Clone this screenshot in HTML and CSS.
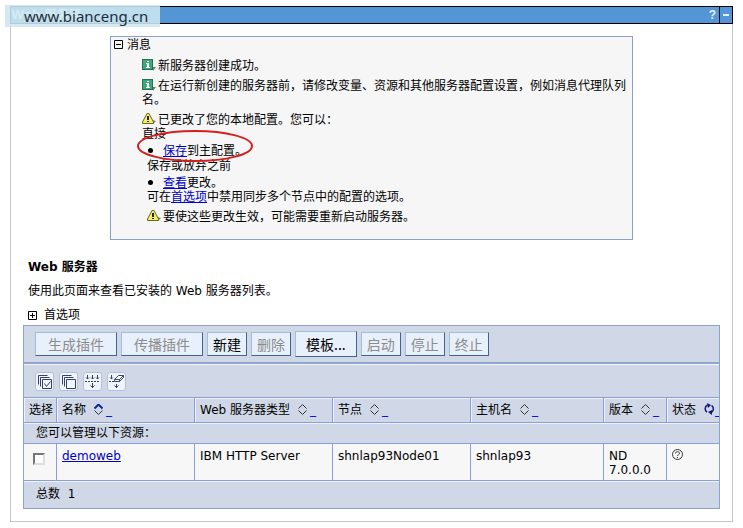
FILE: index.html
```
<!DOCTYPE html>
<html lang="zh-CN">

<head>
  <meta charset="UTF-8">
  <title>Web 服务器</title>
  <meta name="viewport" content="width=device-width, initial-scale=1.0">
  <link rel="stylesheet" href="styles.css">
</head>

<body>
  <!-- 公用图标 -->
  <svg class="symbols" width="0" height="0">
    <symbol id="icon-info" viewBox="0 0 14 12">
      <path d="M11 8l3 0-3 4z" fill="#777"/>
      <rect x="0.5" y="0.5" width="10" height="10" fill="#3fa878" stroke="#1f7550"/>
      <path d="M5 2h2v1H5zM4 4h3v4h1v1H4V8h1V5H4z" fill="#fff"/>
    </symbol>
    <symbol id="icon-warn" viewBox="0 0 14 12">
      <path d="M10 7l4 1-3 3z" fill="#777"/>
      <path d="M5 0.5h2L11.5 9v1.5H0.5V9z" fill="#f5f06a" stroke="#66661c"/>
      <path d="M5 3h2v4H5zM5 8h2v1H5z" fill="#222"/>
    </symbol>
    <symbol id="icon-sort" viewBox="0 0 9 11">
      <path d="M0.5 4.5l4-4 4 4M0.5 6.5l4 4 4-4" fill="none" stroke="#333"/>
    </symbol>
  </svg>

  <div class="watermark">www.bianceng.cn</div>

  <main class="panel">
    <header class="titlebar">
      <h1>Web 服务器</h1>
      <button class="title-btn" type="button" aria-label="帮助">?</button>
      <button class="title-btn divided" type="button" aria-label="最小化"><span class="dash"></span></button>
    </header>

    <section class="messages">
      <h2 class="msg-title">
        <svg class="toggle" viewBox="0 0 9 9"><path d="M0.5 0.5h8v8h-8zM2 4.5h5" fill="none" stroke="#000"/></svg>消息
      </h2>
      <div class="msg-list">
        <p class="msg"><svg class="msg-icon"><use href="#icon-info"/></svg>新服务器创建成功。</p>
        <p class="msg"><svg class="msg-icon"><use href="#icon-info"/></svg>在运行新创建的服务器前，请修改变量、资源和其他服务器配置设置，例如消息代理队列名。</p>
        <p class="msg"><svg class="msg-icon"><use href="#icon-warn"/></svg>已更改了您的本地配置。您可以：<br>直接</p>
        <div class="sub">
          <ul class="save-item">
            <li><a href="#">保存</a>到主配置。
              <svg class="mark" viewBox="0 0 118 34"><ellipse cx="59" cy="17" rx="57" ry="15" fill="none" stroke="#d3201f" stroke-width="2"/></svg>
            </li>
          </ul>
          <p>保存或放弃之前</p>
          <ul>
            <li><a href="#">查看</a>更改。</li>
          </ul>
          <p>可在<a href="#">首选项</a>中禁用同步多个节点中的配置的选项。</p>
          <p class="msg"><svg class="msg-icon"><use href="#icon-warn"/></svg>要使这些更改生效，可能需要重新启动服务器。</p>
        </div>
      </div>
    </section>

    <section class="content">
      <h2 class="page-title">Web 服务器</h2>
      <p class="desc">使用此页面来查看已安装的 Web 服务器列表。</p>
      <p class="prefs">
        <svg class="toggle" viewBox="0 0 9 9"><path d="M0.5 0.5h8v8h-8zM2 4.5h5M4.5 2v5" fill="none" stroke="#000"/></svg>首选项
      </p>

      <div class="grid">
        <div class="toolbar">
          <button class="btn wide" type="button" disabled>生成插件</button>
          <button class="btn wide" type="button" disabled>传播插件</button>
          <button class="btn" type="button">新建</button>
          <button class="btn" type="button" disabled>删除</button>
          <button class="btn tall" type="button">模板...</button>
          <button class="btn" type="button" disabled>启动</button>
          <button class="btn" type="button" disabled>停止</button>
          <button class="btn" type="button" disabled>终止</button>
        </div>

        <div class="toolbar icons">
          <button class="icon-btn" type="button" aria-label="全选">
            <svg viewBox="0 0 17 17"><path d="M2.5 11.5v-9h9M4.5 13.5v-9h9M6.5 6.5h9v9h-9zM8.5 10.5l2 3 4-5" /></svg>
          </button>
          <button class="icon-btn" type="button" aria-label="取消全选">
            <svg viewBox="0 0 17 17"><path d="M2.5 11.5v-9h9M4.5 13.5v-9h9M6.5 6.5h9v9h-9z"/></svg>
          </button>
          <button class="icon-btn" type="button" aria-label="显示过滤器">
            <svg viewBox="0 0 17 17"><path d="M3.5 2v4M8.5 2v4M13.5 2v4M2 4.5l1.5 1.5L5 4.5M7 4.5l1.5 1.5L10 4.5M12 4.5l1.5 1.5L15 4.5M8.5 10v5M6.5 12.5l2 2 2-2"/><path d="M1 8.5h15" stroke-dasharray="2 1"/></svg>
          </button>
          <button class="icon-btn" type="button" aria-label="清除过滤器">
            <svg viewBox="0 0 17 17"><path d="M3.5 2v4M2 4.5l1.5 1.5L5 4.5M8.500 11v4M6.5 12.5l2 2 2-2"/><path d="M6.5 6.5l4-4h5v2l-4 4h-5zM6.5 6.5h5l4-4M11.5 6.5v2" fill="#fff"/><path d="M1 8.5h5" stroke-dasharray="2 1"/></svg>
          </button>
        </div>

        <table class="servers">
          <colgroup>
            <col class="col-select">
            <col class="col-text">
            <col class="col-text">
            <col class="col-text">
            <col>
            <col class="col-version">
            <col class="col-status">
          </colgroup>
          <thead>
            <tr>
              <th>选择</th>
              <th>名称<a href="#" class="sort" aria-label="按名称排序"><svg viewBox="0 0 9 11"><path d="M0.5 4.5l4-4 4 4" fill="none" stroke="#0a2a9a" stroke-width="2"/><path d="M0.5 6.5l4 4 4-4" fill="none" stroke="#333"/></svg>_</a></th>
              <th>Web 服务器类型<a href="#" class="sort" aria-label="按类型排序"><svg><use href="#icon-sort"/></svg>_</a></th>
              <th>节点<a href="#" class="sort" aria-label="按节点排序"><svg><use href="#icon-sort"/></svg>_</a></th>
              <th>主机名<a href="#" class="sort" aria-label="按主机名排序"><svg><use href="#icon-sort"/></svg>_</a></th>
              <th>版本<a href="#" class="sort" aria-label="按版本排序"><svg><use href="#icon-sort"/></svg>_</a></th>
              <th class="status">状态<a href="#" class="sort" aria-label="刷新"><svg viewBox="0 0 11 12"><path d="M3.5 2C0.5 3.5 0.5 7.5 3 9M7.5 2.500c2.500 1.500 2.500 5 0 7" fill="none" stroke="#14147c" stroke-width="1.5"/><path d="M3 0l4 2-3 3zM8 7l-4 2 4 3z" fill="#14147c"/></svg>_</a></th>
            </tr>
          </thead>
          <tbody>
            <tr>
              <td class="band" colspan="7">您可以管理以下资源：</td>
            </tr>
            <tr class="data">
              <td class="pick"><input type="checkbox" aria-label="选择 demoweb"></td>
              <td><a href="#">demoweb</a></td>
              <td>IBM HTTP Server</td>
              <td>shnlap93Node01</td>
              <td>shnlap93</td>
              <td>ND 7.0.0.0</td>
              <td>
                <svg class="unknown" viewBox="0 0 11 11"><circle cx="5.5" cy="5.5" r="5" fill="none" stroke="#333"/><path d="M3.5 4.5c0-2.5 4-2.5 4 0 0 1-2 1-2 2.5M5.5 8v1" fill="none" stroke="#333"/></svg>
              </td>
            </tr>
          </tbody>
          <tfoot>
            <tr>
              <td class="band total" colspan="7">总数 &nbsp;1</td>
            </tr>
          </tfoot>
        </table>
      </div>
    </section>
  </main>
</body>

</html>
```
FILE: styles.css
```
* {
  margin: 0;
  padding: 0;
  box-sizing: border-box;
}

body {
  padding: 6px 10px 6px 10px;
  background-color: #fff;
  color: #000;
  font-family: "DejaVu Sans", "Noto Sans CJK SC", sans-serif;
  font-size: 12px;
  line-height: 14px;
}

a {
  color: #0000c8;
}

ul {
  list-style: none;
}

.symbols {
  position: absolute;
}

.watermark {
  position: absolute;
  left: 5px;
  top: 5px;
  z-index: 2;
  width: 155px;
  height: 22px;
  padding-left: 19px;
  background-color: rgba(205, 231, 240, 0.88);
  color: #1c2c38;
  font-family: "Noto Sans", sans-serif;
  font-size: 15px;
  line-height: 22px;
}

.panel {
  border: 1px solid #c6c6c6;
  border-top: none;
  padding-bottom: 12px;
}

/* 标题栏 */
.titlebar {
  display: flex;
  height: 18px;
  margin: 0 -1px;
  border: 1px solid #000;
  background-color: #5495d6;
}

.titlebar h1 {
  flex: 1;
  color: #fff;
  font-size: 12px;
  line-height: 16px;
}

.title-btn {
  width: 13px;
  border: none;
  background: none;
  color: #e4f0fb;
  font-family: "Liberation Sans", sans-serif;
  font-size: 12px;
  font-weight: bold;
  line-height: 14px;
}

.title-btn.divided {
  border-left: 1px solid #000;
}

.dash {
  display: block;
  width: 6px;
  height: 2px;
  margin: 0 auto;
  background-color: #e4f0fb;
}

/* 消息 */
.messages {
  margin: 12px 99px 20px;
  padding-bottom: 16px;
  border: 1px solid #8c9fcb;
  background-color: #f6f6f6;
  font-family: "Noto Sans CJK SC", sans-serif;
}

.msg-title {
  display: flex;
  align-items: center;
  padding-left: 3px;
  font-size: 12px;
  font-weight: normal;
}

.toggle {
  width: 9px;
  height: 9px;
  margin-right: 4px;
}

.msg-list {
  padding: 1px 4px 0 31px;
}

.msg {
  margin-top: 6px;
}

.msg-icon {
  width: 14px;
  height: 12px;
  margin-right: 2px;
  vertical-align: -1px;
}

.sub {
  padding-left: 5px;
}

.sub ul {
  padding: 3px 0 0 16px;
}

.sub .save-item {
  padding-bottom: 1px;
}

.sub li {
  position: relative;
}

.sub li::before {
  content: "";
  position: absolute;
  left: -15px;
  top: 5px;
  width: 5px;
  height: 5px;
  border-radius: 50%;
  background-color: #000;
}

/* 红圈标注 */
.mark {
  position: absolute;
  left: -27px;
  top: -14px;
  width: 118px;
  height: 34px;
}

/* 页面内容 */
.content {
  padding: 0 12px;
}

.page-title {
  padding-left: 5px;
  font-size: 12px;
}

.desc {
  margin-top: 10px;
  padding-left: 5px;
}

.prefs {
  display: flex;
  align-items: center;
  margin: 10px 0 3px;
  padding-left: 5px;
}

.prefs .toggle {
  margin-right: 7px;
}

.grid {
  border: 1px solid #8ea1d3;
  background-color: #d0d8e8;
}

.toolbar {
  display: flex;
  flex-wrap: wrap;
  align-items: center;
  gap: 4px;
  min-height: 38px;
  padding: 0 11px;
  border-bottom: 2px solid #8ea6d0;
}

.btn {
  height: 24px;
  padding: 0 5px;
  border: 1px solid #a3bcda;
  border-right-color: #41658f;
  border-bottom-color: #41658f;
  background-color: #e8f0fc;
  color: #000;
  font-family: "Noto Sans CJK SC", sans-serif;
  font-size: 14px;
  line-height: 20px;
}

.btn:disabled {
  color: #8c8c8c;
}

.btn.wide {
  padding: 0 12px;
}

.btn.tall {
  height: 26px;
  padding: 0 10px;
}

.toolbar.icons {
  min-height: 33px;
  gap: 5px;
  border-top: 1px solid #f2f6fb;
  border-bottom: none;
}

.icon-btn {
  width: 19px;
  height: 19px;
  border: 1px solid #b4c0d4;
  border-radius: 3px;
  background-color: #f0f5fb;
}

.icon-btn svg {
  display: block;
  width: 17px;
  height: 17px;
  fill: none;
  stroke: #32436b;
}

/* 服务器列表 */
.servers {
  width: 100%;
  border-collapse: separate;
  border-spacing: 0;
  table-layout: fixed;
}

.col-select {
  width: 32px;
}

.col-text {
  width: 138px;
}

.col-version {
  width: 63px;
}

.col-status {
  width: 53px;
}

.servers th,
.servers td {
  padding: 5px;
  border-top: 1px solid #8c9ddb;
  border-left: 1px solid #8c9ddb;
  text-align: left;
  vertical-align: top;
}

.servers th:first-child,
.servers td:first-child {
  border-left: none;
}

.servers th {
  height: 25px;
  overflow: hidden;
  box-shadow: inset 1px 1px 0 #edf3fa;
  font-weight: normal;
  white-space: nowrap;
}

.sort {
  text-decoration: none;
}

.sort svg {
  width: 9px;
  height: 11px;
  margin: 0 3px 0 8px;
  vertical-align: -1px;
}

.servers .status {
  padding-right: 0;
}

.status .sort svg {
  width: 11px;
  height: 12px;
  margin-right: 0;
}

.servers .band {
  height: 21px;
  padding: 3px 12px;
  box-shadow: inset 0 1px 0 #edf3fa;
}

.data td {
  height: 37px;
  padding-bottom: 2px;
  background-color: #f7f7f7;
}

.servers .pick {
  padding: 9px 9px 0;
}

.pick input {
  display: block;
  width: 12px;
  height: 12px;
  appearance: none;
  border: 2px solid;
  border-color: #777 #ddd #ddd #777;
  background-color: #fff;
}

.unknown {
  display: block;
  width: 11px;
  height: 11px;
}

.servers .total {
  height: 28px;
  padding-top: 6px;
}
```
